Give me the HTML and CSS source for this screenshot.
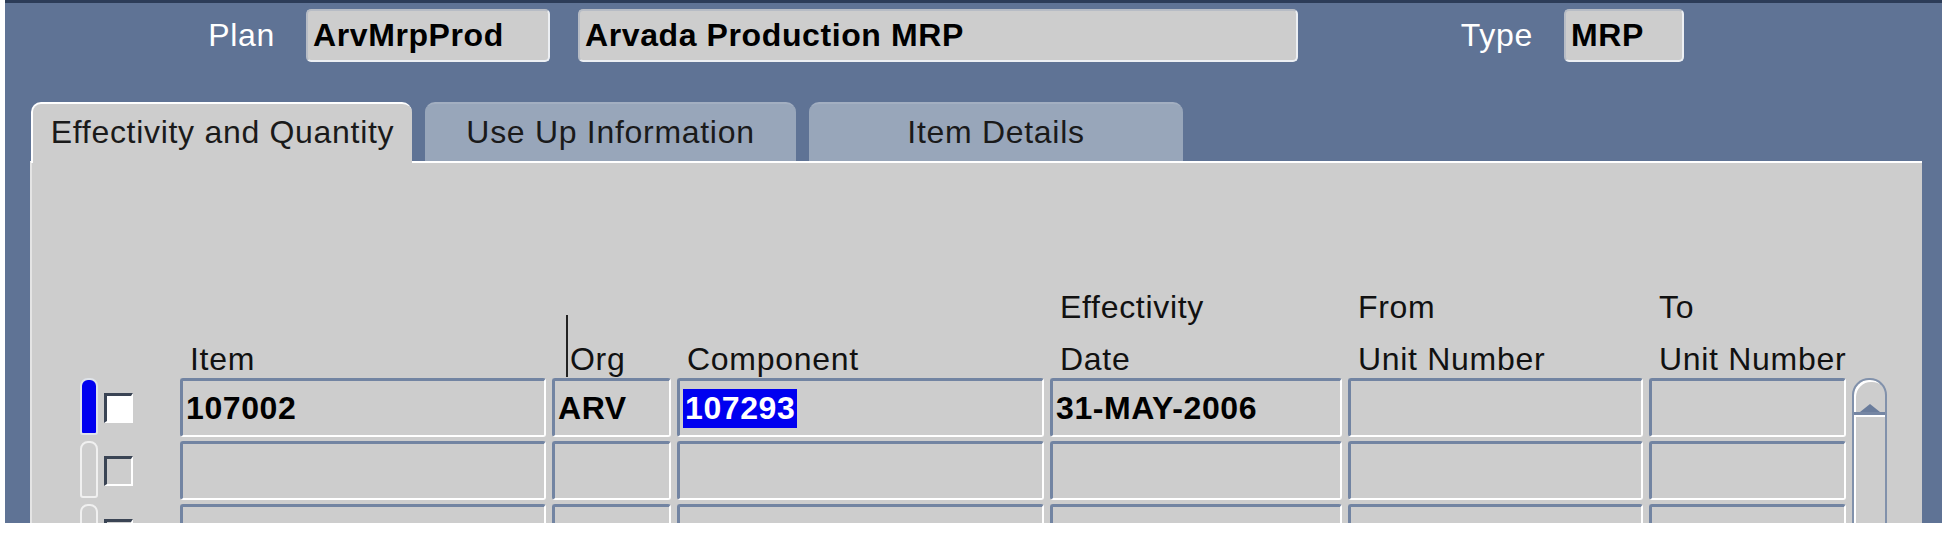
FILE: index.html
```html
<!DOCTYPE html>
<html lang="en">
<head>
    <meta charset="UTF-8">
    <title>Sourcing Rules - Arvada Production MRP</title>
    <link rel="stylesheet" href="styles.css">
</head>
<body>

<div class="window">
    <div class="plan-bar">
        <span class="lbl plan-lbl">Plan</span>
        <div class="hdr-field plan-name">ArvMrpProd</div>
        <div class="hdr-field plan-desc">Arvada Production MRP</div>
        <span class="lbl type-lbl">Type</span>
        <div class="hdr-field plan-type">MRP</div>
    </div>

    <div class="tabs">
        <div class="tab active tab-eff">Effectivity and Quantity</div>
        <div class="tab tab-use">Use Up Information</div>
        <div class="tab tab-item">Item Details</div>
    </div>

    <div class="panel">
        <div class="grid">
            <div class="corner"></div>
            <div class="col-lbl">Item</div>
            <div class="col-lbl org">Org</div>
            <div class="col-lbl">Component</div>
            <div class="col-lbl">Effectivity<br>Date</div>
            <div class="col-lbl">From<br>Unit Number</div>
            <div class="col-lbl">To<br>Unit Number</div>

            <div class="scroll">
                <div class="scroll-up"></div>
            </div>

            <!-- row 1 (current record) -->
            <div class="ind current"></div>
            <div class="chk on"></div>
            <div class="cell">107002</div>
            <div class="cell">ARV</div>
            <div class="cell"><span class="sel">107293</span></div>
            <div class="cell">31-MAY-2006</div>
            <div class="cell"></div>
            <div class="cell"></div>

            <!-- row 2 -->
            <div class="ind"></div>
            <div class="chk"></div>
            <div class="cell"></div>
            <div class="cell"></div>
            <div class="cell"></div>
            <div class="cell"></div>
            <div class="cell"></div>
            <div class="cell"></div>

            <!-- row 3 -->
            <div class="ind"></div>
            <div class="chk"></div>
            <div class="cell"></div>
            <div class="cell"></div>
            <div class="cell"></div>
            <div class="cell"></div>
            <div class="cell"></div>
            <div class="cell"></div>
        </div>
    </div>
</div>

</body>
</html>
```

FILE: styles.css
```css
body {
    margin: 0;
    background: #fff;
    font-family: "Liberation Sans", Arial, sans-serif;
    font-size: 32px;
    letter-spacing: 0.7px;
    color: #111;
}

.window {
    margin-left: 5px;
    height: 523px;
    box-sizing: border-box;
    background: #5f7395;
    border-top: 3px solid #2c3c58;
    overflow: hidden;
}

/* plan header */
.plan-bar {
    display: flex;
    align-items: center;
    height: 53px;
    padding-top: 6px;
}

.lbl {
    width: 80px;
    text-align: right;
    color: #fff;
}

.plan-lbl {
    margin-left: 190px;
}

.type-lbl {
    margin-left: 155px;
}

.hdr-field {
    box-sizing: border-box;
    height: 53px;
    line-height: 49px;
    padding-left: 5px;
    margin-left: 31px;
    background: #cdcdcd;
    border: 2px solid #b7bcc5;
    border-right-color: #eceff3;
    border-bottom-color: #eceff3;
    border-radius: 5px;
    font-weight: bold;
    letter-spacing: 0.6px;
    color: #000;
    white-space: nowrap;
}

.plan-name {
    width: 244px;
}

.plan-desc {
    width: 720px;
    margin-left: 28px;
}

.plan-type {
    width: 120px;
}

/* tabs */
.tabs {
    display: flex;
    align-items: flex-end;
    gap: 13px;
    height: 59px;
    margin: 40px 0 0 26px;
}

.tab {
    box-sizing: border-box;
    height: 59px;
    line-height: 57px;
    text-align: center;
    white-space: nowrap;
    background: #98a6ba;
    border-top: 2px solid #a3afc1;
    border-radius: 10px 10px 0 0;
    color: #1a1a1a;
}

.tab.active {
    position: relative;
    z-index: 1;
    height: 61px;
    margin-bottom: -2px;
    background: #cdcdcd;
    border-top: 2px solid #fff;
    border-left: 2px solid #fff;
}

.tab-eff {
    width: 381px;
}

.tab-use {
    width: 371px;
}

.tab-item {
    width: 374px;
}

/* tab page */
.panel {
    box-sizing: border-box;
    width: 1892px;
    height: 400px;
    margin-left: 25px;
    padding: 118px 0 0 48px;
    background: #cdcdcd;
    border-top: 2px solid #fff;
    border-left: 2px solid #e4e4e4;
}

.grid {
    display: grid;
    grid-template-columns: 18px 70px 366px 119px 367px 292px 295px 197px 35px;
    grid-template-rows: auto 59px 59px 59px;
    column-gap: 6px;
    row-gap: 4px;
}

.corner {
    grid-column: span 2;
}

.col-lbl {
    align-self: end;
    margin-bottom: -11px;
    padding-left: 10px;
    line-height: 52px;
    white-space: nowrap;
}

.col-lbl.org {
    margin: 0 0 -3px 14px;
    padding: 26px 0 0 2px;
    line-height: 36px;
    border-left: 2px solid #222;
}

.ind {
    grid-column: 1;
    box-sizing: border-box;
    width: 18px;
    height: 57px;
    border: 2px solid #f0f0f0;
    border-radius: 8px 8px 3px 3px;
}

.ind.current {
    background: #0000f0;
    border-color: #dfe3ea;
}

.chk {
    box-sizing: border-box;
    align-self: center;
    width: 29px;
    height: 30px;
    background: #cdcdcd;
    border-top: 3px solid #3a4454;
    border-left: 3px solid #3a4454;
    border-right: 2px solid #fff;
    border-bottom: 2px solid #fff;
}

.chk.on {
    background: #fff;
}

.cell {
    box-sizing: border-box;
    display: flex;
    align-items: center;
    padding-left: 3px;
    background: #cdcdcd;
    border-top: 3px solid #7284a2;
    border-left: 3px solid #7284a2;
    border-right: 2px solid #fff;
    border-bottom: 2px solid #fff;
    border-radius: 3px;
    font-weight: bold;
    letter-spacing: 0.6px;
    color: #000;
    white-space: nowrap;
    overflow: hidden;
}

.sel {
    padding: 0 2px;
    line-height: 39px;
    background: #0000f0;
    color: #fff;
}

.scroll {
    grid-column: 9;
    grid-row: 2 / span 3;
    box-sizing: border-box;
    background: #cdcdcd;
    border: 2px solid #8191ab;
    border-bottom: none;
    border-radius: 17px 17px 0 0;
    box-shadow: inset 2px 2px 0 #fff;
}

.scroll-up {
    box-sizing: border-box;
    display: flex;
    justify-content: center;
    height: 35px;
    padding-top: 15px;
    border-bottom: 3px solid #7586a3;
    box-shadow: 0 2px 0 #fff;
}

.scroll-up::before {
    content: "";
    border-left: 10px solid transparent;
    border-right: 10px solid transparent;
    border-bottom: 8px solid #6a7c9b;
}
```
